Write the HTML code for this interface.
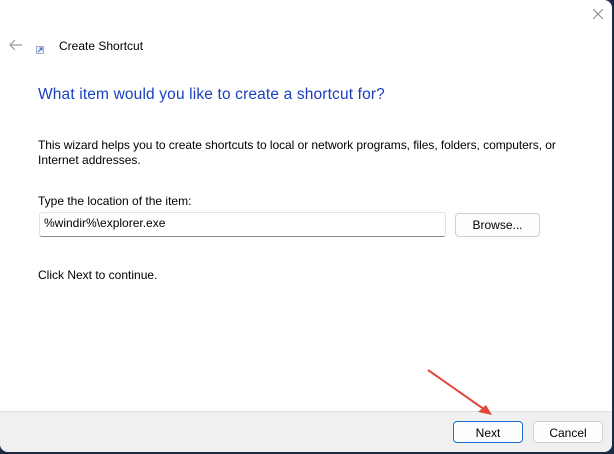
<!DOCTYPE html>
<html><head><style>
body{margin:0;width:614px;height:454px;background:#1d2a44;overflow:hidden;font-family:"Liberation Sans",sans-serif;}
.win{position:absolute;left:0;top:0;width:612px;height:452px;background:#fff;border-radius:0 8px 8px 8px;overflow:hidden;}
.t{position:absolute;font-size:12px;color:#000;white-space:nowrap;}
.foot{position:absolute;left:0;top:411px;width:612px;height:41px;background:#f0f0f0;border-top:1px solid #e0e0e0;}
.btn{position:absolute;height:22px;border:1px solid #cfcfcf;border-radius:4px;background:#fdfdfd;font-size:12px;text-align:center;line-height:22px;box-sizing:border-box;}
</style></head><body>
<div class="win">
<svg style="position:absolute;left:8px;top:38px" width="16" height="14"><path d="M14 7H2M7 2L2 7l5 5" stroke="#9a9a9a" stroke-width="1.2" fill="none"/></svg>
<svg style="position:absolute;left:36px;top:46px" width="8" height="8"><rect x="0.5" y="0.5" width="7" height="7" fill="#eef2ff" stroke="#aab"/><path d="M2 6L6 2M3.5 2H6V4.5" stroke="#2a6fd0" stroke-width="1" fill="none"/></svg>
<div class="t" style="left:59px;top:39px">Create Shortcut</div>
<svg style="position:absolute;left:593px;top:9px" width="10" height="10"><path d="M0 0L10 10M10 0L0 10" stroke="#888" stroke-width="1"/></svg>
<div class="t" style="left:38px;top:86px;font-size:15.5px;color:#1a3fbf;letter-spacing:0.15px">What item would you like to create a shortcut for?</div>
<div class="t" style="left:38px;top:138px;letter-spacing:-0.05px">This wizard helps you to create shortcuts to local or network programs, files, folders, computers, or</div>
<div class="t" style="left:38px;top:153px">Internet addresses.</div>
<div class="t" style="left:38px;top:194px">Type the location of the item:</div>
<div style="position:absolute;left:39px;top:212px;width:407px;height:25px;border:1px solid #e3e3e3;border-bottom:1px solid #888;border-radius:3px;box-sizing:border-box"></div>
<div class="t" style="left:44px;top:216px">%windir%\explorer.exe</div>
<div class="btn" style="left:455px;top:213px;width:85px;height:24px;line-height:22px">Browse...</div>
<div class="t" style="left:38px;top:268px">Click Next to continue.</div>
<div class="foot"></div>
<div class="btn" style="left:453px;top:421px;width:70px;border:1px solid #1a6fd0">Next</div>
<div class="btn" style="left:533px;top:421px;width:70px">Cancel</div>
<svg style="position:absolute;left:420px;top:365px" width="80" height="55"><path d="M8 5L68 47" stroke="#e04a3c" stroke-width="2"/><path d="M72 50L58 47L66 40Z" fill="#e04a3c"/></svg>
</div>
</body></html>
